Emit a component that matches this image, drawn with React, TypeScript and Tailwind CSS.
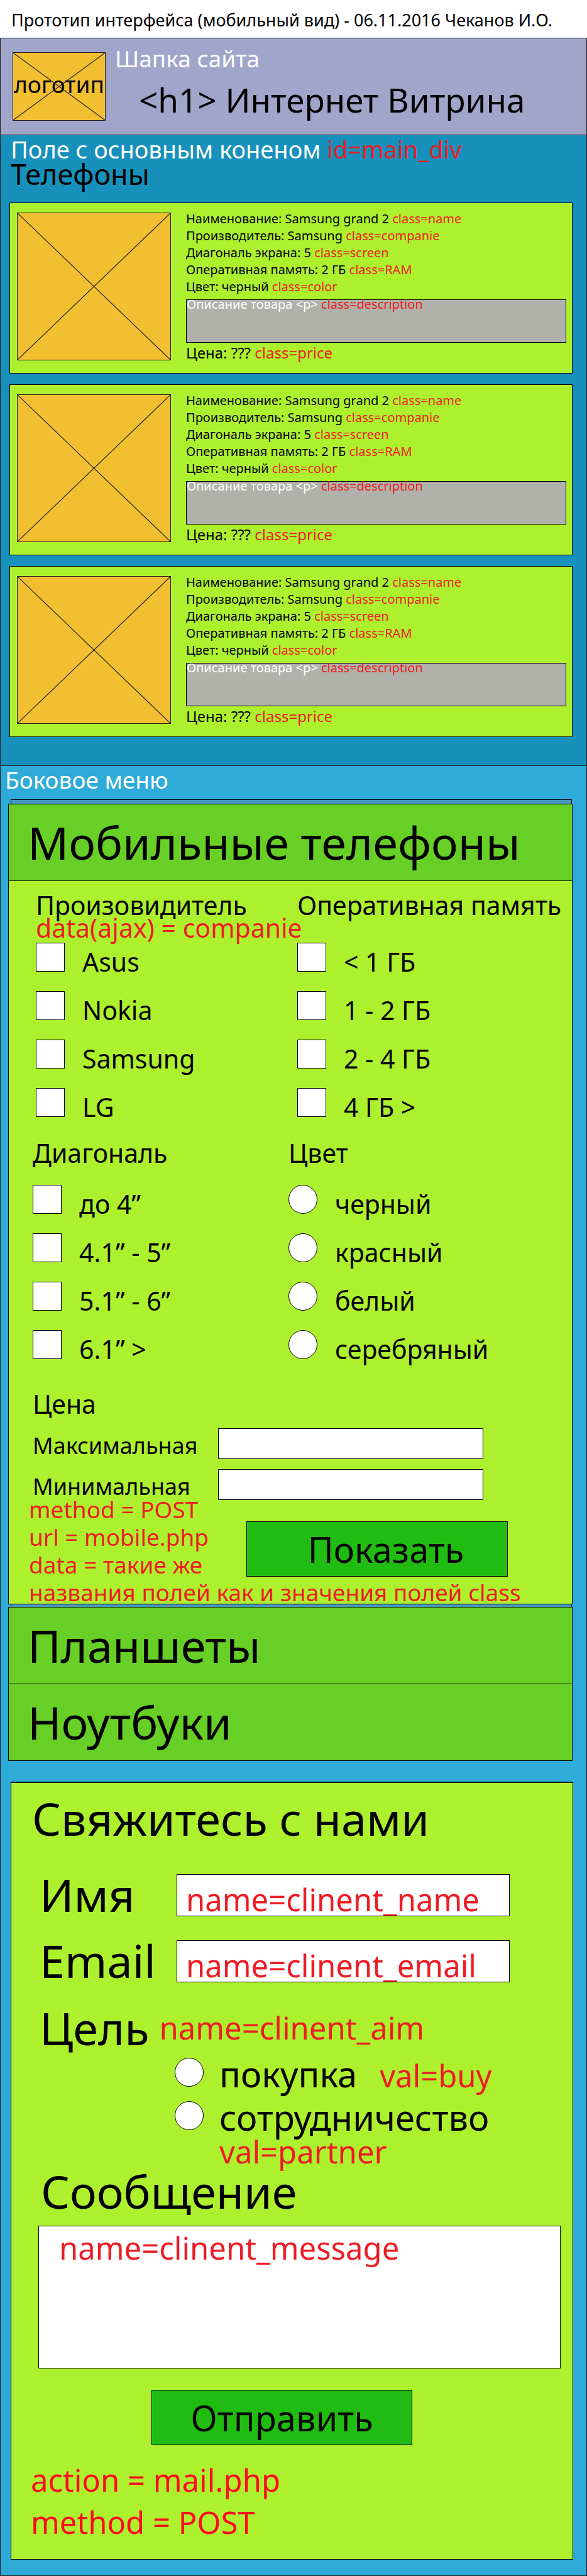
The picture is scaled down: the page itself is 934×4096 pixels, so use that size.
import React from "react";

const PHONES = [1, 2, 3];

const SPECS: [string, string][] = [
  ["Наименование: Samsung grand 2", "class=name"],
  ["Производитель: Samsung", "class=companie"],
  ["Диагональ экрана: 5", "class=screen"],
  ["Оперативная память: 2 ГБ", "class=RAM"],
  ["Цвет: черный", "class=color"],
];

function Cross() {
  return (
    <svg
      className="absolute inset-0 h-full w-full"
      viewBox="0 0 100 100"
      preserveAspectRatio="none"
      aria-hidden="true"
    >
      <path
        d="M0 0L100 100M100 0L0 100"
        stroke="#231f20"
        strokeWidth="1.2"
        vectorEffect="non-scaling-stroke"
        fill="none"
      />
    </svg>
  );
}

function Note({ children }: { children: React.ReactNode }) {
  return <span className="text-[#ed1c24]">{children}</span>;
}

function PhoneCard() {
  return (
    <article className="flex h-[272px] gap-6 border border-black bg-[#adf02e] pr-[9px] pl-[11px]">
      <div className="relative mt-[15px] h-[235px] w-[245px] shrink-0 border border-[#231f20] bg-[#f2bf30]">
        <Cross />
      </div>
      <div className="min-w-0 flex-1 pt-[11px] text-[20px]">
        {SPECS.map(([text, note]) => (
          <p key={note} className="leading-[27px]">
            {text} <Note>{note}</Note>
          </p>
        ))}
        <p className="mt-[7px] h-[69px] border border-black bg-[#b0b1aa] leading-[14px] text-white">
          Описание товара &lt;p&gt; <Note>class=description</Note>
        </p>
        <p className="text-2xl leading-8">
          Цена: ??? <Note>class=price</Note>
        </p>
      </div>
    </article>
  );
}

function Options({
  type,
  name,
  items,
}: {
  type: "checkbox" | "radio";
  name: string;
  items: string[];
}) {
  return (
    <div className="flex flex-col gap-[17px]">
      {items.map((item) => (
        <label key={item} className="flex items-start gap-7 leading-[60px]">
          <input
            type={type}
            name={name}
            value={item}
            className={
              type === "radio"
                ? "size-[46px] shrink-0 appearance-none rounded-full border border-black bg-white"
                : "size-[46px] shrink-0 appearance-none border border-black bg-white"
            }
          />
          {item}
        </label>
      ))}
    </div>
  );
}

function AccordionHeader({ title, open }: { title: string; open?: boolean }) {
  return (
    <h2>
      <button
        type="button"
        aria-expanded={!!open}
        className="block h-[121px] w-full pl-[30px] text-left text-[72px] leading-[119px] whitespace-nowrap"
      >
        {title}
      </button>
    </h2>
  );
}

export default function App() {
  return (
    <div className="bg-white font-['Noto_Sans',sans-serif] text-black">
      <p className="pt-1 pl-[18px] text-[27px] leading-[56px] whitespace-nowrap">
        Прототип интерфейса (мобильный вид) - 06.11.2016 Чеканов И.О.
      </p>

      <header className="flex h-[155px] border border-[#231f20] bg-[#a0a6ca] pl-[19px]">
        <div className="relative mt-[22px] flex h-[109px] w-[148px] shrink-0 items-center justify-center border border-[#231f20] bg-[#f2bf30] pb-2 text-[37px]">
          <Cross />
          <span className="relative">логотип</span>
        </div>
        <div className="pt-2 pl-[15px] whitespace-nowrap">
          <p className="text-[37px] leading-[48px] text-white">Шапка сайта</p>
          <h1 className="mt-[10px] pl-[38px] text-[53px] leading-[64px]">
            &lt;h1&gt; Интернет Витрина
          </h1>
        </div>
      </header>

      <main className="border-x border-b border-[#231f20] bg-[#1791bb] pr-[22px] pb-[45px] pl-[14px]">
        <p className="pl-[2px] text-[38px] leading-[44px] whitespace-nowrap text-white">
          Поле с основным коненом <Note>id=main_div</Note>
        </p>
        <h2 className="pl-[2px] text-[45px] leading-9">Телефоны</h2>
        <div className="mt-[27px] flex flex-col gap-[17px]">
          {PHONES.map((id) => (
            <PhoneCard key={id} />
          ))}
        </div>
      </main>

      <aside className="border-x border-b border-[#231f20] bg-[#2eabd8] pb-[25px]">
        <p className="pl-[7px] text-[37px] leading-[44px] text-white">Боковое меню</p>

        <div className="mt-[9px] mr-[23px] ml-[16px] border border-b-0 border-black bg-[#4797c1] pt-[6px]">
          <section className="-mr-[2px] -ml-[5px] border border-black bg-[#67cf25]">
            <AccordionHeader title="Мобильные телефоны" open />
            <form
              className="border-t border-black bg-[#adf02e] pt-[18px] text-[41px]"
              onSubmit={(e) => e.preventDefault()}
            >
              <div className="grid grid-cols-[416px_1fr] pl-[43px] whitespace-nowrap">
                <div role="group" aria-labelledby="f-company">
                  <h3 id="f-company" className="leading-10">
                    Произовидитель
                  </h3>
                  <p className="mb-2 h-8 leading-8">
                    <Note>data(ajax) = companie</Note>
                  </p>
                  <Options type="checkbox" name="companie" items={["Asus", "Nokia", "Samsung", "LG"]} />
                </div>
                <div role="group" aria-labelledby="f-ram">
                  <h3 id="f-ram" className="mb-10 leading-10">
                    Оперативная память
                  </h3>
                  <Options
                    type="checkbox"
                    name="RAM"
                    items={["< 1 ГБ", "1 - 2 ГБ", "2 - 4 ГБ", "4 ГБ >"]}
                  />
                </div>
              </div>

              <div className="mt-[23px] grid grid-cols-[407px_1fr] pl-[38px] whitespace-nowrap">
                <div role="group" aria-labelledby="f-screen">
                  <h3 id="f-screen" className="mb-[31px] leading-10">
                    Диагональ
                  </h3>
                  <Options
                    type="checkbox"
                    name="screen"
                    items={["до 4”", "4.1” - 5”", "5.1” - 6”", "6.1” >"]}
                  />
                </div>
                <div role="group" aria-labelledby="f-color">
                  <h3 id="f-color" className="mb-[31px] leading-10">
                    Цвет
                  </h3>
                  <Options
                    type="radio"
                    name="color"
                    items={["черный", "красный", "белый", "серебряный"]}
                  />
                </div>
              </div>

              <div className="mt-[37px] pl-[38px]">
                <h3 className="leading-10">Цена</h3>
                <div className="mt-[19px] flex flex-col gap-4 text-[36px] leading-[43px]">
                  <div className="flex">
                    <label htmlFor="price-max" className="w-[295px] pt-[6px]">
                      Максимальная
                    </label>
                    <input
                      id="price-max"
                      type="text"
                      className="h-[49px] w-[422px] border border-black bg-white px-2"
                    />
                  </div>
                  <div className="flex">
                    <label htmlFor="price-min" className="w-[295px] pt-[6px]">
                      Минимальная
                    </label>
                    <input
                      id="price-min"
                      type="text"
                      className="h-[49px] w-[422px] border border-black bg-white px-2"
                    />
                  </div>
                </div>
              </div>

              <div className="-mt-[7px] pl-8 text-[37px] leading-[44px] whitespace-nowrap text-[#ed1c24]">
                <div className="flex">
                  <div className="w-[346px]">
                    <p>method = POST</p>
                    <p>url = mobile.php</p>
                    <p>data = такие же</p>
                  </div>
                  <button
                    type="submit"
                    className="mt-[41px] h-[88px] w-[416px] border border-black bg-[#21bc12] pl-7 text-[56px] leading-[84px] text-black"
                  >
                    Показать
                  </button>
                </div>
                <p className="h-10">названия полей как и значения полей class</p>
              </div>
            </form>
          </section>

          <section className="mt-1 -mr-[2px] -ml-[5px] divide-y divide-black border border-black bg-[#67cf25]">
            <AccordionHeader title="Планшеты" />
            <AccordionHeader title="Ноутбуки" />
          </section>
        </div>

        <form
          className="mt-[33px] mr-[21px] ml-[16px] border border-t-2 border-black bg-[#adf02e] pt-4 pb-[25px] whitespace-nowrap"
          onSubmit={(e) => e.preventDefault()}
        >
          <h2 className="pl-[33px] text-[72px] leading-[80px]">Свяжитесь с нами</h2>

          <div className="mt-[49px] flex flex-col gap-[38px] pl-[45px] text-[72px] leading-[64px]">
            <div className="flex h-[67px]">
              <label htmlFor="client-name" className="w-[218px]">
                Имя
              </label>
              <input
                id="client-name"
                type="text"
                defaultValue="name=clinent_name"
                className="h-[67px] w-[530px] border border-black bg-white pt-3 pl-[14px] text-[49px] leading-[54px] text-[#ed1c24]"
              />
            </div>
            <div className="flex h-[67px]">
              <label htmlFor="client-email" className="w-[218px]">
                Email
              </label>
              <input
                id="client-email"
                type="text"
                defaultValue="name=clinent_email"
                className="h-[67px] w-[530px] border border-black bg-white pt-3 pl-[14px] text-[49px] leading-[54px] text-[#ed1c24]"
              />
            </div>
          </div>

          <div role="group" aria-labelledby="client-aim" className="mt-8 text-[49px]">
            <div className="flex gap-4 pl-[45px] leading-[80px]">
              <span id="client-aim" className="text-[72px]">
                Цель
              </span>
              <Note>name=clinent_aim</Note>
            </div>
            <div className="mt-2 flex flex-col gap-[19px] pl-[260px] text-[56px] leading-[50px]">
              <div className="flex items-start gap-9">
                <label className="flex gap-[25px]">
                  <input
                    type="radio"
                    name="aim"
                    value="buy"
                    className="size-[46px] shrink-0 appearance-none rounded-full border border-black bg-white"
                  />
                  покупка
                </label>
                <span className="h-[50px] text-[49px] leading-[56px] text-[#ed1c24]">val=buy</span>
              </div>
              <label className="flex gap-[25px]">
                <input
                  type="radio"
                  name="aim"
                  value="partner"
                  className="size-[46px] shrink-0 appearance-none rounded-full border border-black bg-white"
                />
                сотрудничество
              </label>
            </div>
            <p className="pl-[331px] leading-[60px] text-[#ed1c24]">val=partner</p>
          </div>

          <div className="pr-[19px] pl-[43px]">
            <label htmlFor="client-message" className="block pl-1 text-[72px] leading-[66px]">
              Сообщение
            </label>
            <textarea
              id="client-message"
              defaultValue="name=clinent_message"
              className="mt-[22px] block h-[227px] w-full resize-none border border-black bg-white pt-0.5 pl-8 text-[49px] leading-[64px] text-[#ed1c24]"
            />
          </div>

          <button
            type="submit"
            className="mt-[34px] ml-[223px] block h-[88px] w-[415px] border border-black bg-[#21bc12] text-[56px] leading-[84px]"
          >
            Отправить
          </button>

          <div className="mt-[22px] pl-[31px] text-[49px] leading-[67px] text-[#ff0a20]">
            <p>action = mail.php</p>
            <p>method = POST</p>
          </div>
        </form>
      </aside>
    </div>
  );
}
